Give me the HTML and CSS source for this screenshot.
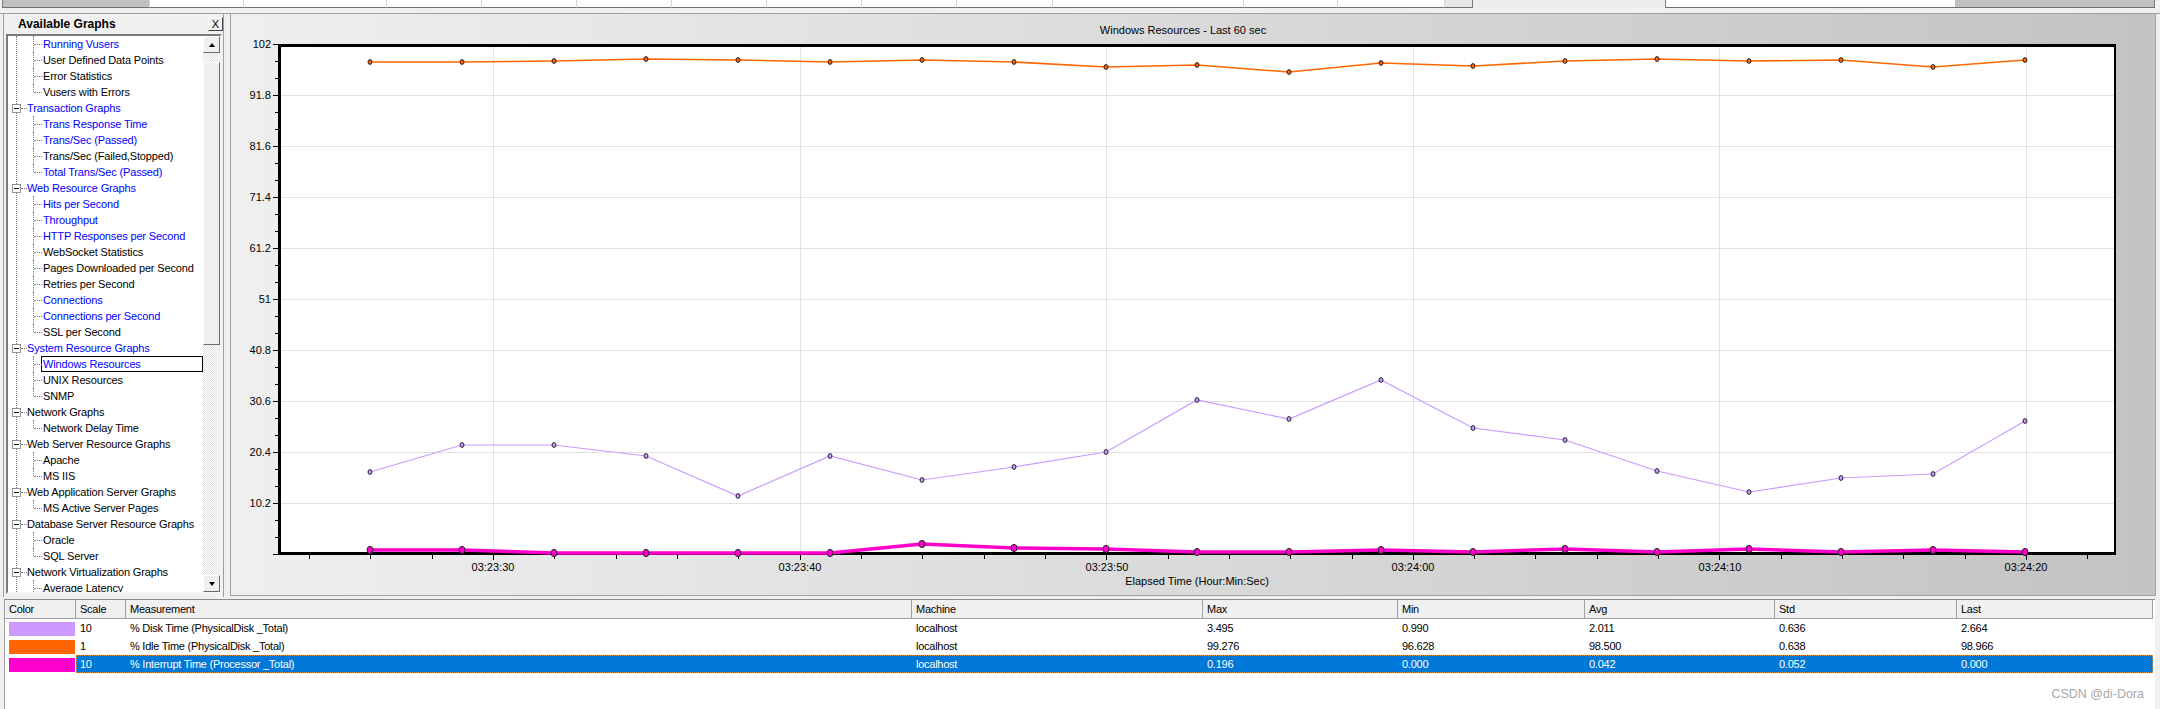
FILE: index.html
```html
<!DOCTYPE html>
<html>
<head>
<meta charset="utf-8">
<title>Windows Resources</title>
<link rel="stylesheet" href="styles.css">
</head>
<body>
<div class="topbar">
  <span class="tc tc-gray"></span><span class="tc"></span><span class="tc"></span><span class="tc"></span><span class="tc"></span><span class="tc"></span><span class="tc"></span><span class="tc"></span><span class="tc"></span><span class="tc"></span><span class="tc"></span><span class="tc"></span><span class="tc"></span><span class="tc tc-lt"></span><span class="tc tc-gap"></span><span class="tc tc-box"></span><span class="tc tc-gray2"></span>
</div>
<div class="gap"></div>
<div class="main">
  <div class="left">
    <div class="lp-head"><span class="lp-title">Available Graphs</span><span class="lp-close">X</span></div>
    <div class="treebox">
      <div class="tree">
        <div class="r c b">Running Vusers</div>
        <div class="r c">User Defined Data Points</div>
        <div class="r c">Error Statistics</div>
        <div class="r c last">Vusers with Errors</div>
        <div class="r t b"><span class="box"></span><span class="conn"></span>Transaction Graphs</div>
        <div class="r c b">Trans Response Time</div>
        <div class="r c b">Trans/Sec (Passed)</div>
        <div class="r c">Trans/Sec (Failed,Stopped)</div>
        <div class="r c last b">Total Trans/Sec (Passed)</div>
        <div class="r t b"><span class="box"></span><span class="conn"></span>Web Resource Graphs</div>
        <div class="r c b">Hits per Second</div>
        <div class="r c b">Throughput</div>
        <div class="r c b">HTTP Responses per Second</div>
        <div class="r c">WebSocket Statistics</div>
        <div class="r c">Pages Downloaded per Second</div>
        <div class="r c">Retries per Second</div>
        <div class="r c b">Connections</div>
        <div class="r c b">Connections per Second</div>
        <div class="r c last">SSL per Second</div>
        <div class="r t b"><span class="box"></span><span class="conn"></span>System Resource Graphs</div>
        <div class="r c b"><span class="focus">Windows Resources</span></div>
        <div class="r c">UNIX Resources</div>
        <div class="r c last">SNMP</div>
        <div class="r t"><span class="box"></span><span class="conn"></span>Network Graphs</div>
        <div class="r c last">Network Delay Time</div>
        <div class="r t"><span class="box"></span><span class="conn"></span>Web Server Resource Graphs</div>
        <div class="r c">Apache</div>
        <div class="r c last">MS IIS</div>
        <div class="r t"><span class="box"></span><span class="conn"></span>Web Application Server Graphs</div>
        <div class="r c last">MS Active Server Pages</div>
        <div class="r t"><span class="box"></span><span class="conn"></span>Database Server Resource Graphs</div>
        <div class="r c">Oracle</div>
        <div class="r c last">SQL Server</div>
        <div class="r t"><span class="box"></span><span class="conn"></span>Network Virtualization Graphs</div>
        <div class="r c">Average Latency</div>
      </div>
      <div class="vscroll">
        <div class="sb-btn"><span class="tri-up"></span></div>
        <div class="sb-track sb-t1"></div>
        <div class="sb-thumb"></div>
        <div class="sb-track sb-t2"></div>
        <div class="sb-btn"><span class="tri-down"></span></div>
      </div>
    </div>
  </div>
  <div class="chart">
    <svg class="plot" width="1924" height="581" viewBox="231 14 1924 581" xmlns="http://www.w3.org/2000/svg">
      <defs>
        <marker id="mo" markerUnits="userSpaceOnUse" markerWidth="8" markerHeight="8" refX="4" refY="4"><ellipse cx="4" cy="4" rx="2" ry="2.4" fill="#ff6600" stroke="#111" stroke-width="0.9"/></marker>
        <marker id="mp" markerUnits="userSpaceOnUse" markerWidth="8" markerHeight="8" refX="4" refY="4"><ellipse cx="4" cy="4" rx="2" ry="2.4" fill="#cc99ff" stroke="#111" stroke-width="0.9"/></marker>
        <marker id="mm" markerUnits="userSpaceOnUse" markerWidth="10" markerHeight="10" refX="5" refY="5"><ellipse cx="5" cy="5" rx="3" ry="3.6" fill="#ff00cc" stroke="#222" stroke-width="1"/></marker>
      </defs>
      <text class="ttl" x="1183" y="34" text-anchor="middle">Windows Resources - Last 60 sec</text>
      <rect x="278" y="44" width="1838" height="510" fill="#ffffff"/>
      <path d="M281 95.5H2114M281 146.5H2114M281 197.5H2114M281 248.5H2114M281 299.5H2114M281 350.5H2114M281 401.5H2114M281 452.5H2114M281 503.5H2114M493.5 47V552M800.5 47V552M1106.5 47V552M1413.5 47V552M1719.5 47V552M2026.5 47V552" stroke="#e2e2e2" stroke-width="1" fill="none"/>
      <path d="M273 44.5H278M275 61.5H278M275 78.5H278M273 95.5H278M275 112.5H278M275 129.5H278M273 146.5H278M275 163.5H278M275 180.5H278M273 197.5H278M275 214.5H278M275 231.5H278M273 248.5H278M275 265.5H278M275 282.5H278M273 299.5H278M275 316.5H278M275 333.5H278M273 350.5H278M275 367.5H278M275 384.5H278M273 401.5H278M275 418.5H278M275 435.5H278M273 452.5H278M275 469.5H278M275 486.5H278M273 503.5H278M275 520.5H278M275 537.5H278M273 554.5H278" stroke="#000" stroke-width="1" fill="none"/>
      <path d="M309.5 555V559M370.5 555V559M432.5 555V559M493.5 555V560M554.5 555V559M616.5 555V559M677.5 555V559M738.5 555V559M800.5 555V560M861.5 555V559M922.5 555V559M984.5 555V559M1045.5 555V559M1106.5 555V560M1168.5 555V559M1229.5 555V559M1290.5 555V559M1352.5 555V559M1413.5 555V560M1474.5 555V559M1535.5 555V559M1597.5 555V559M1658.5 555V559M1719.5 555V560M1781.5 555V559M1842.5 555V559M1903.5 555V559M1965.5 555V559M2026.5 555V560M2087.5 555V559" stroke="#000" stroke-width="1" fill="none"/>
      <g class="ylab" text-anchor="end">
        <text x="271" y="48">102</text>
        <text x="271" y="99">91.8</text>
        <text x="271" y="150">81.6</text>
        <text x="271" y="201">71.4</text>
        <text x="271" y="252">61.2</text>
        <text x="271" y="303">51</text>
        <text x="271" y="354">40.8</text>
        <text x="271" y="405">30.6</text>
        <text x="271" y="456">20.4</text>
        <text x="271" y="507">10.2</text>
      </g>
      <g class="xlab" text-anchor="middle">
        <text x="493" y="571">03:23:30</text>
        <text x="800" y="571">03:23:40</text>
        <text x="1107" y="571">03:23:50</text>
        <text x="1413" y="571">03:24:00</text>
        <text x="1720" y="571">03:24:10</text>
        <text x="2026" y="571">03:24:20</text>
        <text x="1197" y="585">Elapsed Time (Hour:Min:Sec)</text>
      </g>
      <polyline points="370,472 462,445 554,445 646,456 738,496 830,456 922,480 1014,467 1106,452 1197,400 1289,419 1381,380 1473,428 1565,440 1657,471 1749,492 1841,478 1933,474 2025,421" fill="none" stroke="#cc99ff" stroke-width="1.2" marker-start="url(#mp)" marker-mid="url(#mp)" marker-end="url(#mp)"/>
      <polyline points="370,62 462,62 554,61 646,59 738,60 830,62 922,60 1014,62 1106,67 1197,65 1289,72 1381,63 1473,66 1565,61 1657,59 1749,61 1841,60 1933,67 2025,60" fill="none" stroke="#ff6600" stroke-width="1.6" marker-start="url(#mo)" marker-mid="url(#mo)" marker-end="url(#mo)"/>
      <path d="M279.5 44V555M278 45.5H2116M278 553.5H2116" stroke="#000" stroke-width="3" fill="none"/>
      <path d="M2115 44V555" stroke="#000" stroke-width="2" fill="none"/>
      <polyline points="370,550 462,550 554,553 646,553 738,553 830,553 922,544 1014,548 1106,549 1197,552 1289,552 1381,550 1473,552 1565,549 1657,552 1749,549 1841,552 1933,550 2025,552" fill="none" stroke="#ff00cc" stroke-width="3.5" marker-start="url(#mm)" marker-mid="url(#mm)" marker-end="url(#mm)"/>
    </svg>
  </div>
</div>
<div class="legend">
  <div class="lg-grid lg-head">
    <div class="th">Color</div><div class="th">Scale</div><div class="th">Measurement</div><div class="th">Machine</div><div class="th">Max</div><div class="th">Min</div><div class="th">Avg</div><div class="th">Std</div><div class="th">Last</div>
  </div>
  <div class="lg-grid">
    <div class="td"><span class="sw sw-purple"></span></div><div class="td">10</div><div class="td">% Disk Time (PhysicalDisk _Total)</div><div class="td">localhost</div><div class="td">3.495</div><div class="td">0.990</div><div class="td">2.011</div><div class="td">0.636</div><div class="td">2.664</div>
  </div>
  <div class="lg-grid">
    <div class="td"><span class="sw sw-orange"></span></div><div class="td">1</div><div class="td">% Idle Time (PhysicalDisk _Total)</div><div class="td">localhost</div><div class="td">99.276</div><div class="td">96.628</div><div class="td">98.500</div><div class="td">0.638</div><div class="td">98.966</div>
  </div>
  <div class="lg-grid">
    <div class="td"><span class="sw sw-magenta"></span></div>
    <div class="sel">
      <div class="td">10</div><div class="td">% Interrupt Time (Processor _Total)</div><div class="td">localhost</div><div class="td">0.196</div><div class="td">0.000</div><div class="td">0.042</div><div class="td">0.052</div><div class="td">0.000</div>
    </div>
  </div>
</div>
<div class="watermark">CSDN @di-Dora</div>
</body>
</html>
```
FILE: styles.css
```css
html, body {
  margin: 0;
  padding: 0;
}
body {
  width: 2160px;
  height: 709px;
  overflow: hidden;
  position: relative;
  background: #f0f0f0;
  font-family: "Liberation Sans", Arial, sans-serif;
  font-size: 11px;
  color: #000;
}

/* top strip */
.topbar {
  display: grid;
  grid-template-columns: 150px 94px 143px 95px 95px 95px 95px 95px 95px 96px 191px 94px 107px 28px 192px 290px 200px;
  height: 8px;
}
.tc {
  box-sizing: border-box;
  height: 8px;
  background: #fff;
  border-right: 1px solid #d6d6d6;
  border-bottom: 1px solid #6e6e6e;
}
.tc-gray {
  background: #c0c0c0;
  border-left: 1px solid #7a7a7a;
  margin-left: 2px;
}
.tc-lt {
  background: #e6e6e6;
  border-right: 1px solid #7a7a7a;
}
.tc-gap {
  background: #eeeeee;
  border: none;
}
.tc-box {
  border-left: 1px solid #7a7a7a;
  border-right: none;
}
.tc-gray2 {
  background: #c0c0c0;
  border-right: 1px solid #7a7a7a;
}
.gap {
  height: 5px;
}

/* main area */
.main {
  display: flex;
  border-top: 1px solid #a0a0a0;
  height: 583px;
}
.left {
  margin-left: 3px;
  width: 221px;
  box-sizing: border-box;
  border-left: 1px solid #a0a0a0;
  border-right: 1px solid #a0a0a0;
  display: flex;
  flex-direction: column;
}
.lp-head {
  height: 20px;
  display: flex;
  align-items: center;
}
.lp-title {
  padding-left: 14px;
  font-weight: bold;
  font-size: 12px;
}
.lp-close {
  margin-left: auto;
  width: 15px;
  height: 14px;
  box-sizing: border-box;
  border: 1px solid;
  border-color: #ffffff #404040 #404040 #ffffff;
  background: #f0f0f0;
  display: flex;
  align-items: center;
  justify-content: center;
  font-size: 11px;
  line-height: 12px;
}
.treebox {
  margin-left: 2px;
  width: 216px;
  height: 560px;
  box-sizing: border-box;
  border: 2px solid;
  border-color: #7a7a7a #f4f4f4 #f4f4f4 #7a7a7a;
  background: #fff;
  display: flex;
}
.tree {
  flex: 1;
  overflow: hidden;
  position: relative;
  letter-spacing: -0.15px;
}
.tree::before {
  content: "";
  position: absolute;
  left: 8px;
  top: 0;
  bottom: 0;
  border-left: 1px dotted #808080;
}
.r {
  height: 16px;
  line-height: 16px;
  position: relative;
  white-space: nowrap;
  color: #000;
}
.r.b {
  color: #0000ff;
}
.r.c {
  padding-left: 35px;
}
.r.c::before {
  content: "";
  position: absolute;
  left: 25px;
  top: 0;
  height: 16px;
  border-left: 1px dotted #808080;
}
.r.c.last::before {
  height: 8px;
}
.r.c::after {
  content: "";
  position: absolute;
  left: 26px;
  top: 8px;
  width: 8px;
  border-top: 1px dotted #808080;
}
.r.t {
  display: flex;
  align-items: center;
}
.box {
  position: relative;
  width: 9px;
  height: 9px;
  box-sizing: border-box;
  border: 1px solid #919191;
  background: #fff;
  margin-left: 4px;
}
.box::after {
  content: "";
  position: absolute;
  left: 1px;
  top: 3px;
  width: 5px;
  height: 1px;
  background: #000;
}
.conn {
  width: 6px;
  height: 0;
  border-top: 1px dotted #808080;
}
.focus {
  display: inline-block;
  vertical-align: top;
  box-sizing: border-box;
  width: 162px;
  height: 16px;
  line-height: 14px;
  margin-left: -2px;
  padding-left: 1px;
  border: 1px solid #000;
}
.vscroll {
  width: 17px;
  display: flex;
  flex-direction: column;
}
.sb-btn {
  height: 17px;
  box-sizing: border-box;
  background: #f0f0f0;
  border: 1px solid;
  border-color: #ffffff #696969 #696969 #ffffff;
  display: flex;
  align-items: center;
  justify-content: center;
}
.tri-up {
  width: 0;
  height: 0;
  border-left: 3.5px solid transparent;
  border-right: 3.5px solid transparent;
  border-bottom: 4px solid #000;
}
.tri-down {
  width: 0;
  height: 0;
  border-left: 3.5px solid transparent;
  border-right: 3.5px solid transparent;
  border-top: 4px solid #000;
}
.sb-track {
  background: repeating-conic-gradient(#ffffff 0 25%, #e2e2e2 0 50%) 0 0 / 2px 2px;
}
.sb-t1 {
  height: 9px;
}
.sb-t2 {
  flex: 1;
}
.sb-thumb {
  height: 283px;
  box-sizing: border-box;
  background: #f0f0f0;
  border: 1px solid;
  border-color: #ffffff #696969 #696969 #ffffff;
}

/* chart */
.chart {
  margin-left: 6px;
  width: 1926px;
  height: 582px;
  box-sizing: border-box;
  border: 1px solid #a0a0a0;
  border-top: none;
  background: linear-gradient(to right, #efefef 0%, #dcdcdc 45%, #c3c3c3 100%);
}
.plot {
  display: block;
}
.plot text {
  font-family: "Liberation Sans", Arial, sans-serif;
  font-size: 11px;
  fill: #000;
}

/* legend table */
.legend {
  margin: 2px 0 0 4px;
  width: 2151px;
  height: 110px;
  box-sizing: border-box;
  border-left: 1px solid #a0a0a0;
  border-top: 1px solid #8a8a8a;
  background: #fff;
  letter-spacing: -0.25px;
}
.lg-grid {
  display: grid;
  grid-template-columns: 71px 50px 786px 291px 195px 187px 190px 182px 196px;
}
.th {
  height: 19px;
  box-sizing: border-box;
  background: #f0f0f0;
  border-right: 1px solid #a0a0a0;
  border-bottom: 1px solid #a0a0a0;
  padding-left: 4px;
  line-height: 18px;
}
.td {
  height: 18px;
  line-height: 18px;
  padding-left: 4px;
  white-space: nowrap;
}
.sw {
  display: block;
  margin: 3px 0 0 0;
  width: 66px;
  height: 14px;
}
.sw-purple { background: #cc99ff; }
.sw-orange { background: #ff6600; }
.sw-magenta { background: #ff00cc; }
.sel {
  grid-column: 2 / -1;
  display: grid;
  grid-template-columns: 50px 786px 291px 195px 187px 190px 182px 196px;
  background: #0078d7;
  color: #fff;
  outline: 1px dotted #e8913a;
  outline-offset: -1px;
}
.watermark {
  position: absolute;
  right: 16px;
  bottom: 8px;
  font-size: 12.5px;
  color: #a8a8a8;
}
```
